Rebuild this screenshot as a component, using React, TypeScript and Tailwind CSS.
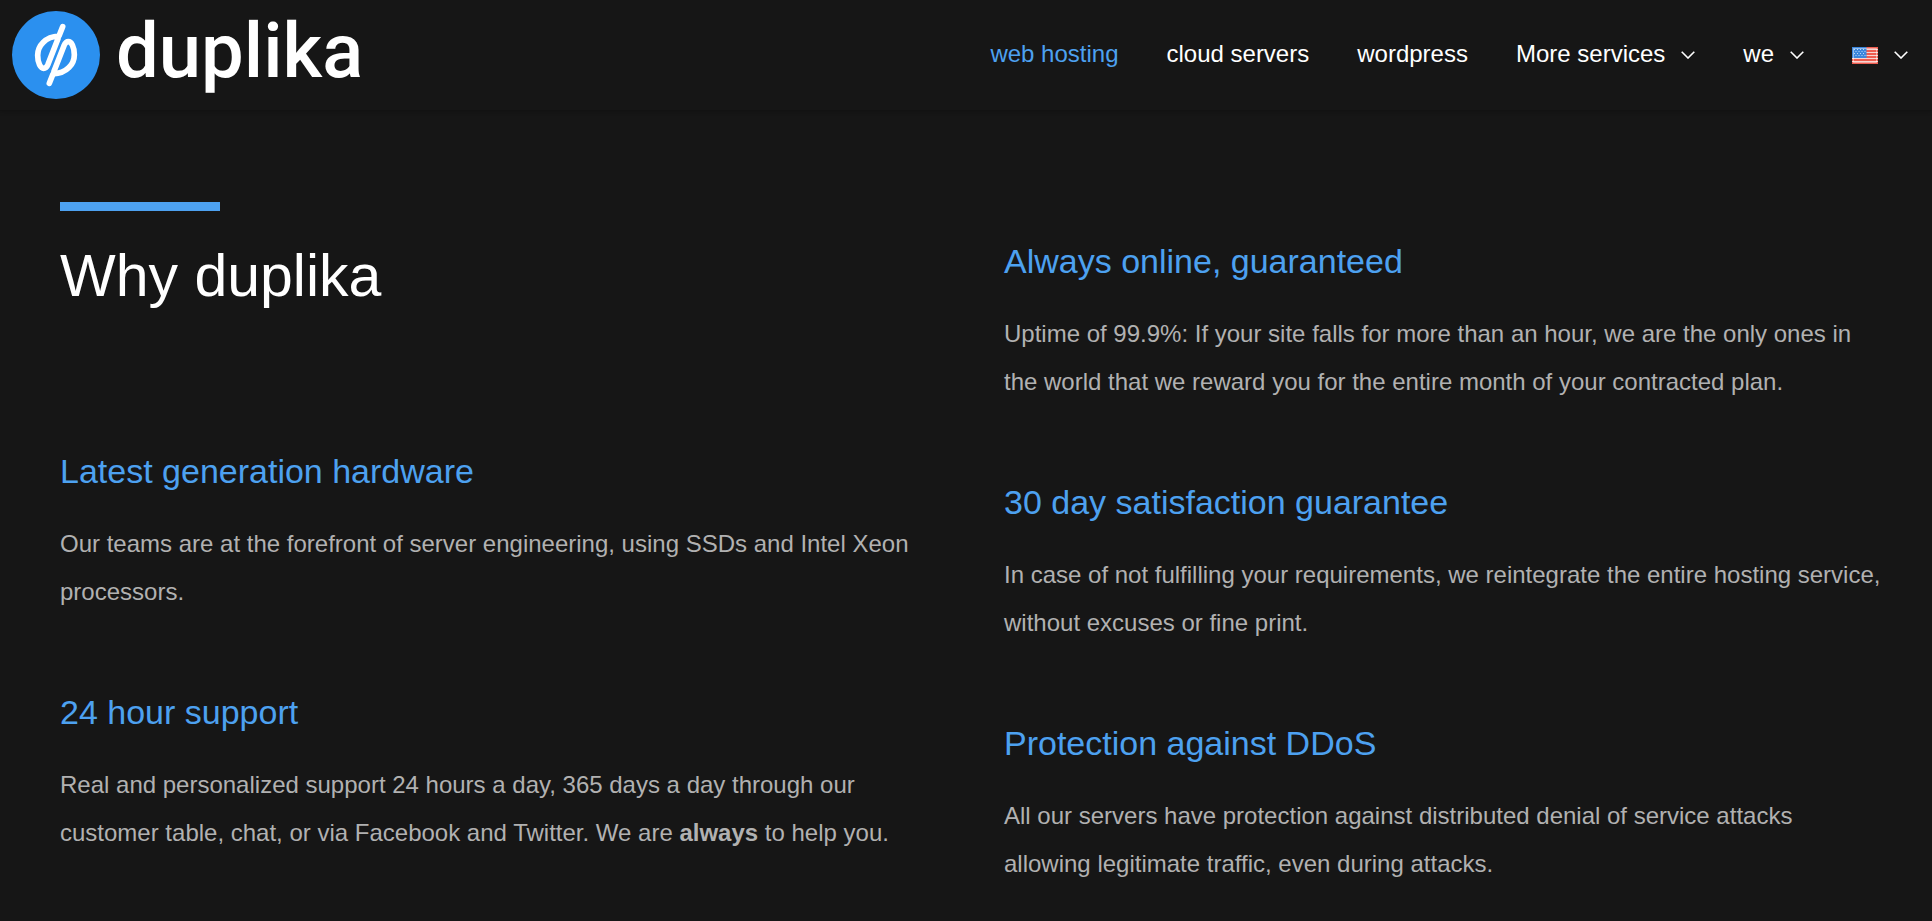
import type { ReactNode } from "react";

const leftFeatures: { title: string; body: ReactNode }[] = [
  {
    title: "Latest generation hardware",
    body: "Our teams are at the forefront of server engineering, using SSDs and Intel Xeon processors.",
  },
  {
    title: "24 hour support",
    body: (
      <>
        Real and personalized support 24 hours a day, 365 days a day through our customer table,
        chat, or via Facebook and Twitter. We are <strong className="font-bold">always</strong> to
        help you.
      </>
    ),
  },
];

const rightFeatures: { title: string; body: ReactNode }[] = [
  {
    title: "Always online, guaranteed",
    body: "Uptime of 99.9%: If your site falls for more than an hour, we are the only ones in the world that we reward you for the entire month of your contracted plan.",
  },
  {
    title: "30 day satisfaction guarantee",
    body: "In case of not fulfilling your requirements, we reintegrate the entire hosting service, without excuses or fine print.",
  },
  {
    title: "Protection against DDoS",
    body: "All our servers have protection against distributed denial of service attacks allowing legitimate traffic, even during attacks.",
  },
];

function Chevron() {
  return (
    <svg className="mt-0.5 w-[14px] h-2 shrink-0" viewBox="0 0 14 8" fill="none" aria-hidden="true">
      <path d="M0.7 0.7 L7 7 L13.3 0.7" stroke="#fff" strokeWidth="1.6" />
    </svg>
  );
}

function LogoMark() {
  return (
    <svg className="w-22 h-22 shrink-0" viewBox="36 33 264 264" fill="none" aria-hidden="true">
      <circle cx="168" cy="165" r="132" fill="#2b90ef" />
      <g stroke="#fff" strokeWidth="17" strokeLinecap="round" strokeLinejoin="round">
        <path d="M188 80 L177 108 C135 110 113 138 113 166 C113 190 122 205 131 205 C138 205 141 200 144 193 L174 116" />
        <path
          d="M188 80 L177 108 C135 110 113 138 113 166 C113 190 122 205 131 205 C138 205 141 200 144 193 L174 116"
          transform="rotate(180 168 165)"
        />
      </g>
    </svg>
  );
}

function UsFlag() {
  return (
    <svg className="mt-0.5 w-[26px] h-[17px] shrink-0" viewBox="0 0 26 17" aria-hidden="true">
      <rect width="26" height="17" fill="#ee5d50" />
      <path
        d="M0 2.5H26M0 5.5H26M0 8.5H26M0 11.5H26M0 14.5H26"
        stroke="#f6d5d1"
        strokeWidth="1.2"
      />
      <rect width="14.5" height="11" fill="#3b86dc" />
      <path
        d="M2 2.5H14M3.5 4.5H14M2 6.5H14M3.5 8.5H14"
        stroke="#b9d8f6"
        strokeWidth="1"
        strokeDasharray="1 2"
      />
      <path d="M1.5 1.5V15.5H24.5V1.5Z" fill="none" stroke="#fff" strokeOpacity="0.45" />
    </svg>
  );
}

function Feature({ title, body }: { title: string; body: ReactNode }) {
  return (
    <article>
      <h3 className="text-[34px] leading-12 text-[#4da1f0]">{title}</h3>
      <p className="mt-[25px] text-2xl leading-12 text-[#b1b1b1]">{body}</p>
    </article>
  );
}

export default function App() {
  return (
    <div className="min-h-screen bg-[#161616] font-['Liberation_Sans',Arial,sans-serif] text-white">
      <header className="flex items-center justify-between border-b border-[#121212] py-[11px] pl-3 pr-6 shadow-[0_1px_4px_rgba(0,0,0,0.2)]">
        <a href="#" className="flex items-center gap-4">
          <LogoMark />
          <span className="pb-2 font-['Roboto',sans-serif] text-[76px] leading-19 font-medium">
            duplika
          </span>
        </a>

        {/* Main menu */}
        <nav className="flex items-center gap-12 pb-[2px] text-2xl leading-9 whitespace-nowrap">
          <a href="#" className="text-[#4da1f0]">
            web hosting
          </a>
          <a href="#">cloud servers</a>
          <a href="#">wordpress</a>
          <button type="button" className="flex items-center gap-4">
            More services
            <Chevron />
          </button>
          <button type="button" className="flex items-center gap-4">
            we
            <Chevron />
          </button>
          <button type="button" aria-label="Language" className="flex items-center gap-4">
            <UsFlag />
            <Chevron />
          </button>
        </nav>
      </header>

      {/* Why duplika */}
      <main className="grid grid-cols-2 gap-[66px] pt-[91px] pr-[50px] pl-15">
        <section>
          <div className="h-[9px] w-40 bg-[#4da1f0]" />
          <h1 className="mt-7 text-[59px] leading-[74px]">Why duplika</h1>
          <div className="mt-[134px] flex flex-col gap-18">
            {leftFeatures.map((f) => (
              <Feature key={f.title} title={f.title} body={f.body} />
            ))}
          </div>
        </section>
        <section className="flex flex-col gap-18 pt-[35px]">
          {rightFeatures.map((f) => (
            <Feature key={f.title} title={f.title} body={f.body} />
          ))}
        </section>
      </main>
    </div>
  );
}
